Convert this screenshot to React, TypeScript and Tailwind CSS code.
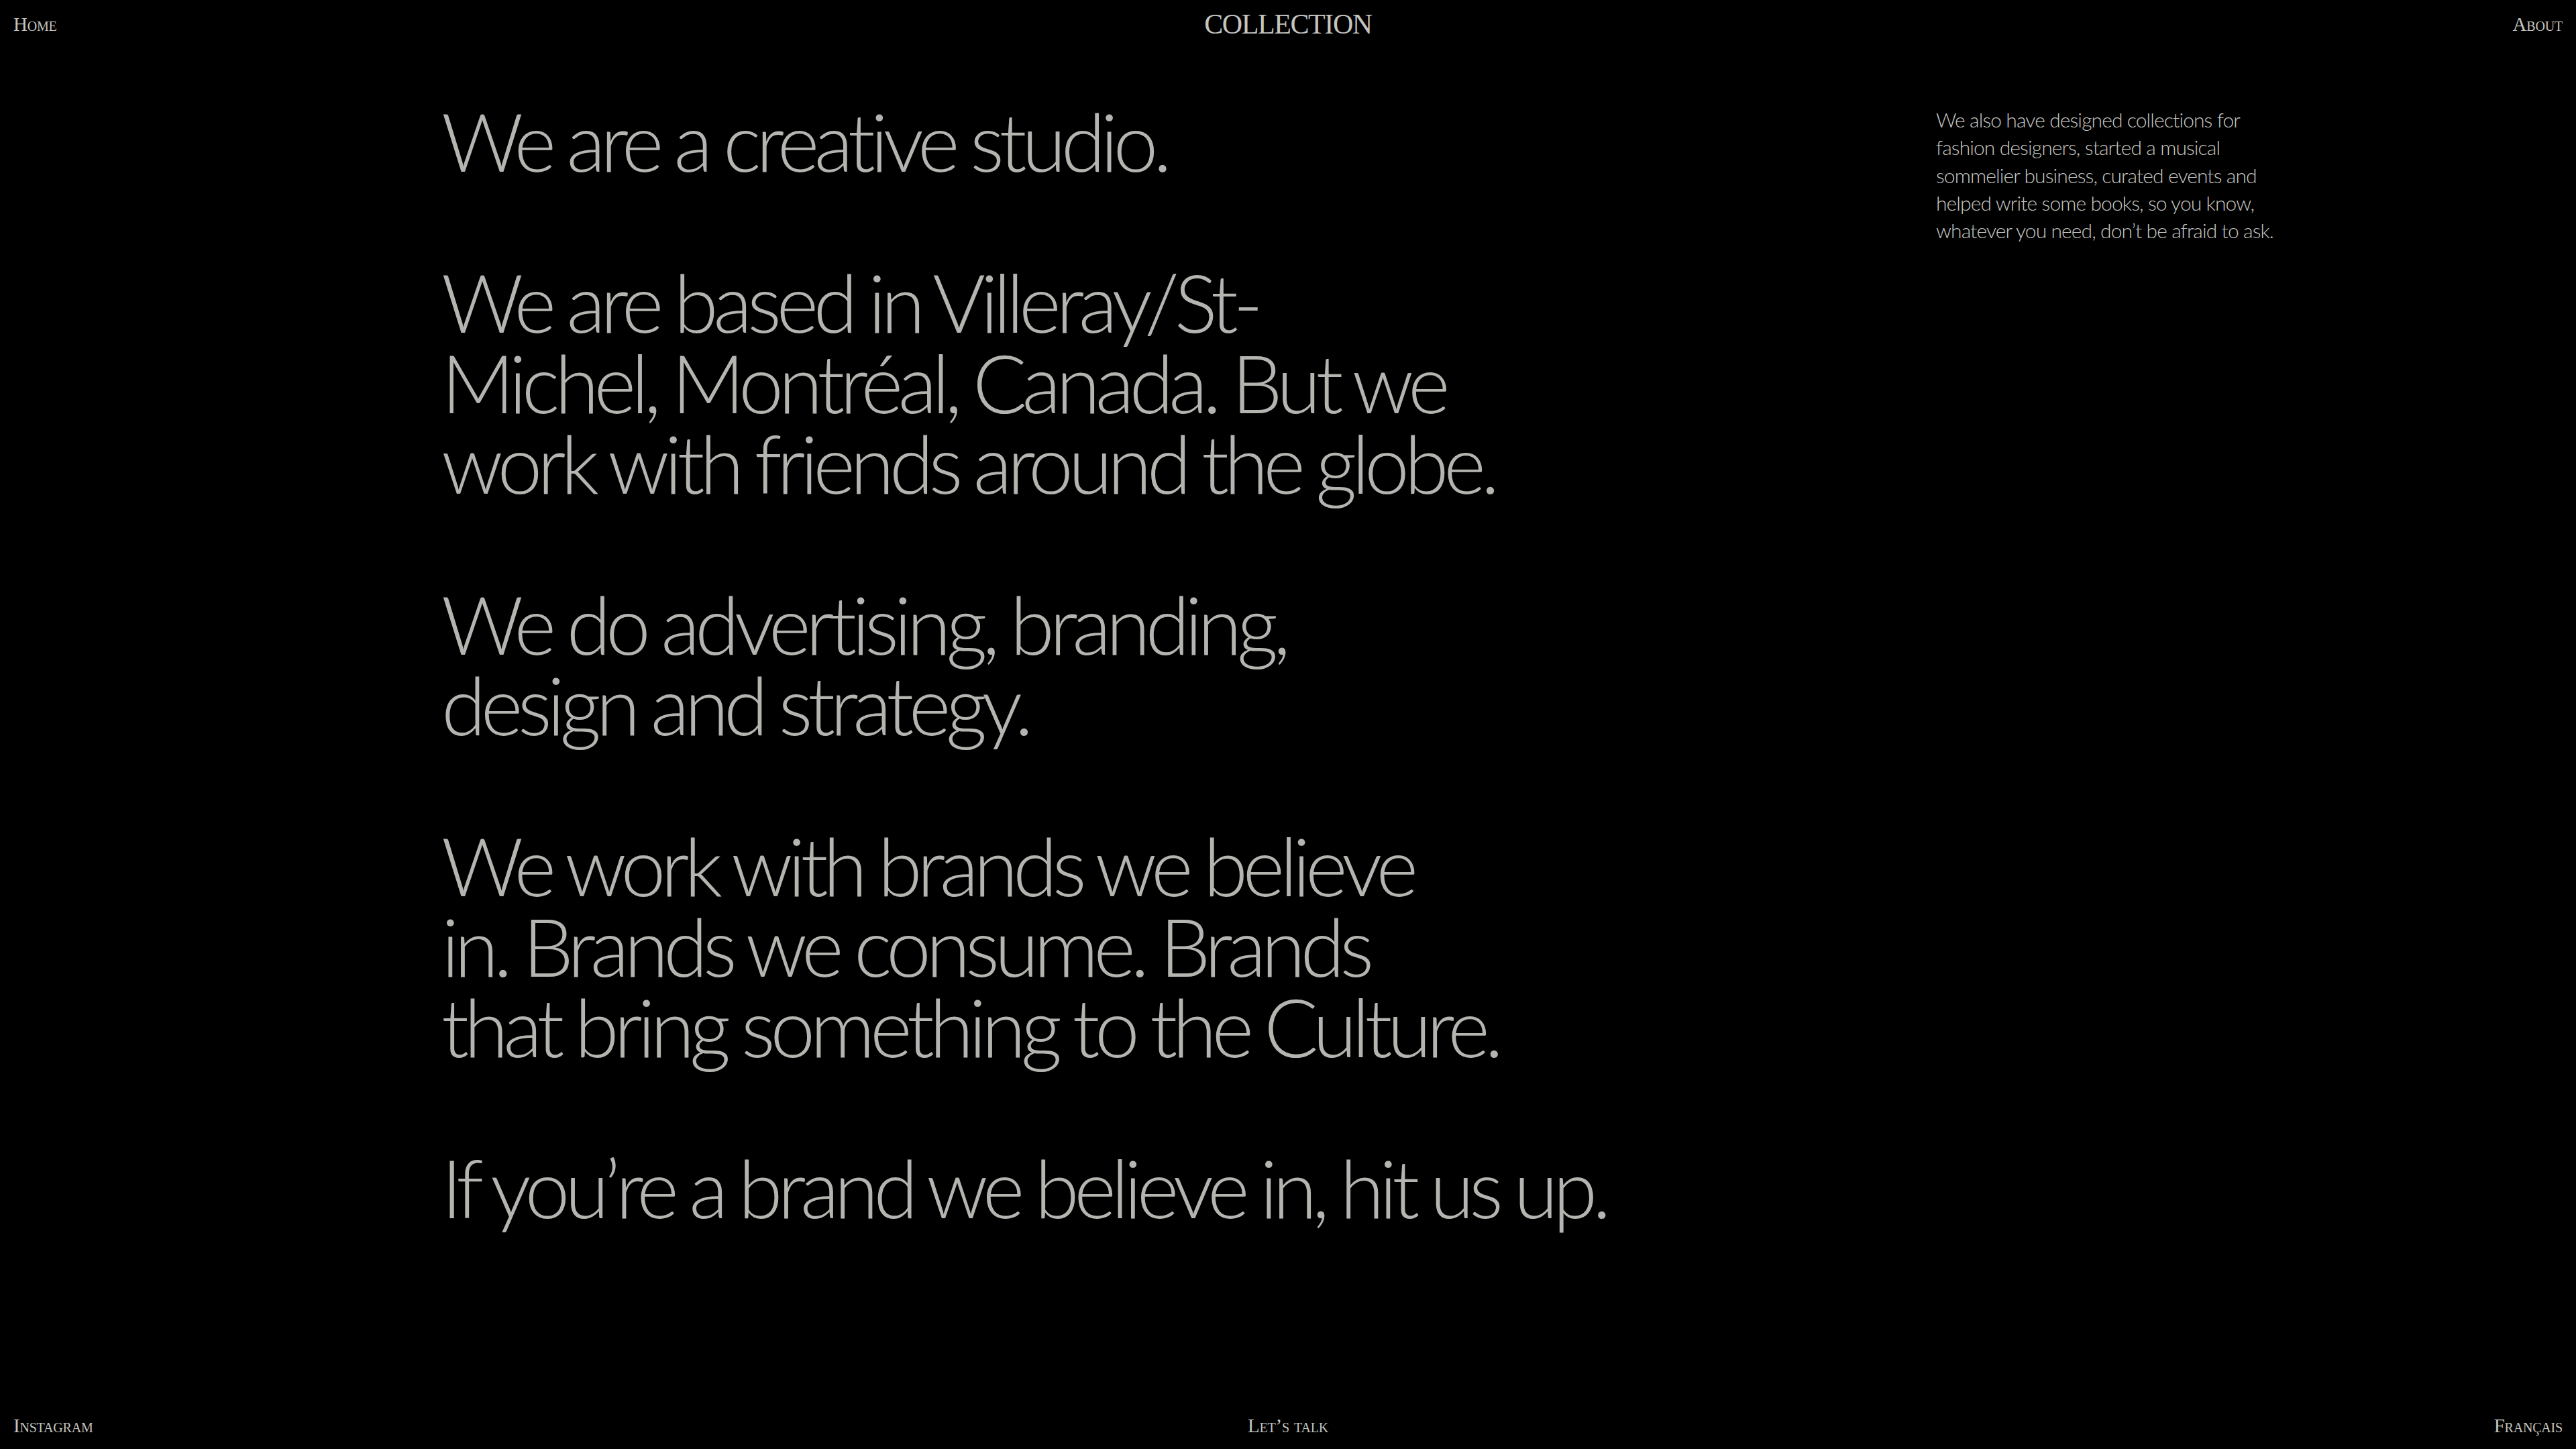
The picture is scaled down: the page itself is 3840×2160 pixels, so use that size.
import React from 'react'

const paragraphs: string[][] = [
  ['We are a creative studio.'],
  [
    'We are based in Villeray/St-',
    'Michel, Montréal, Canada. But we',
    'work with friends around the globe.',
  ],
  ['We do advertising, branding,', 'design and strategy.'],
  [
    'We work with brands we believe',
    'in. Brands we consume. Brands',
    'that bring something to the Culture.',
  ],
  ['If you’re a brand we believe in, hit us up.'],
]

const navClass =
  "font-['Liberation_Serif',serif] text-[29px] text-[#c4c4c0] [font-variant:small-caps] tracking-[-0.2px] leading-[1.107]"

export default function App() {
  return (
    <div className="h-[2160px] w-full bg-black flex flex-col overflow-hidden">
      {/* header */}
      <header className="h-[60px] px-[20px] grid grid-cols-3 items-start">
        <a className={`${navClass} mt-[20px] justify-self-start`}>Home</a>
        <div className="justify-self-center mt-[13px] font-['Liberation_Serif',serif] text-[42px] leading-[1.107] tracking-[-1.4px] text-[#c4c4c0]">
          COLLECTION
        </div>
        <a className={`${navClass} mt-[20px] justify-self-end`}>About</a>
      </header>

      {/* main copy */}
      <main className="flex-1 flex pl-[658px] pt-[90px]">
        <div className="w-[2228px] shrink-0 font-['Lato',sans-serif] font-light text-[120px] leading-[120px] tracking-[-0.062em] [word-spacing:-0.02em] text-[#b4b4b0] flex flex-col gap-[120px]">
          {paragraphs.map((lines, i) => (
            <p key={i}>
              {lines.map((line, j) => (
                <span key={j} className="block whitespace-nowrap">
                  {line}
                </span>
              ))}
            </p>
          ))}
        </div>
        <p className="w-[540px] pt-[8px] font-['Lato',sans-serif] font-light text-[30px] leading-[41.3px] tracking-[-0.03em] text-[#c6c6c2]">
          We also have designed collections for
          <br />
          fashion designers, started a musical
          <br />
          sommelier business, curated events and
          <br />
          helped write some books, so you know,
          <br />
          whatever you need, don’t be afraid to ask.
        </p>
      </main>

      {/* footer */}
      <footer className="px-[20px] pb-[19px] grid grid-cols-3 items-end">
        <a className={`${navClass} justify-self-start`}>Instagram</a>
        <a className={`${navClass} justify-self-center`}>Let’s talk</a>
        <a className={`${navClass} justify-self-end`}>Français</a>
      </footer>
    </div>
  )
}
